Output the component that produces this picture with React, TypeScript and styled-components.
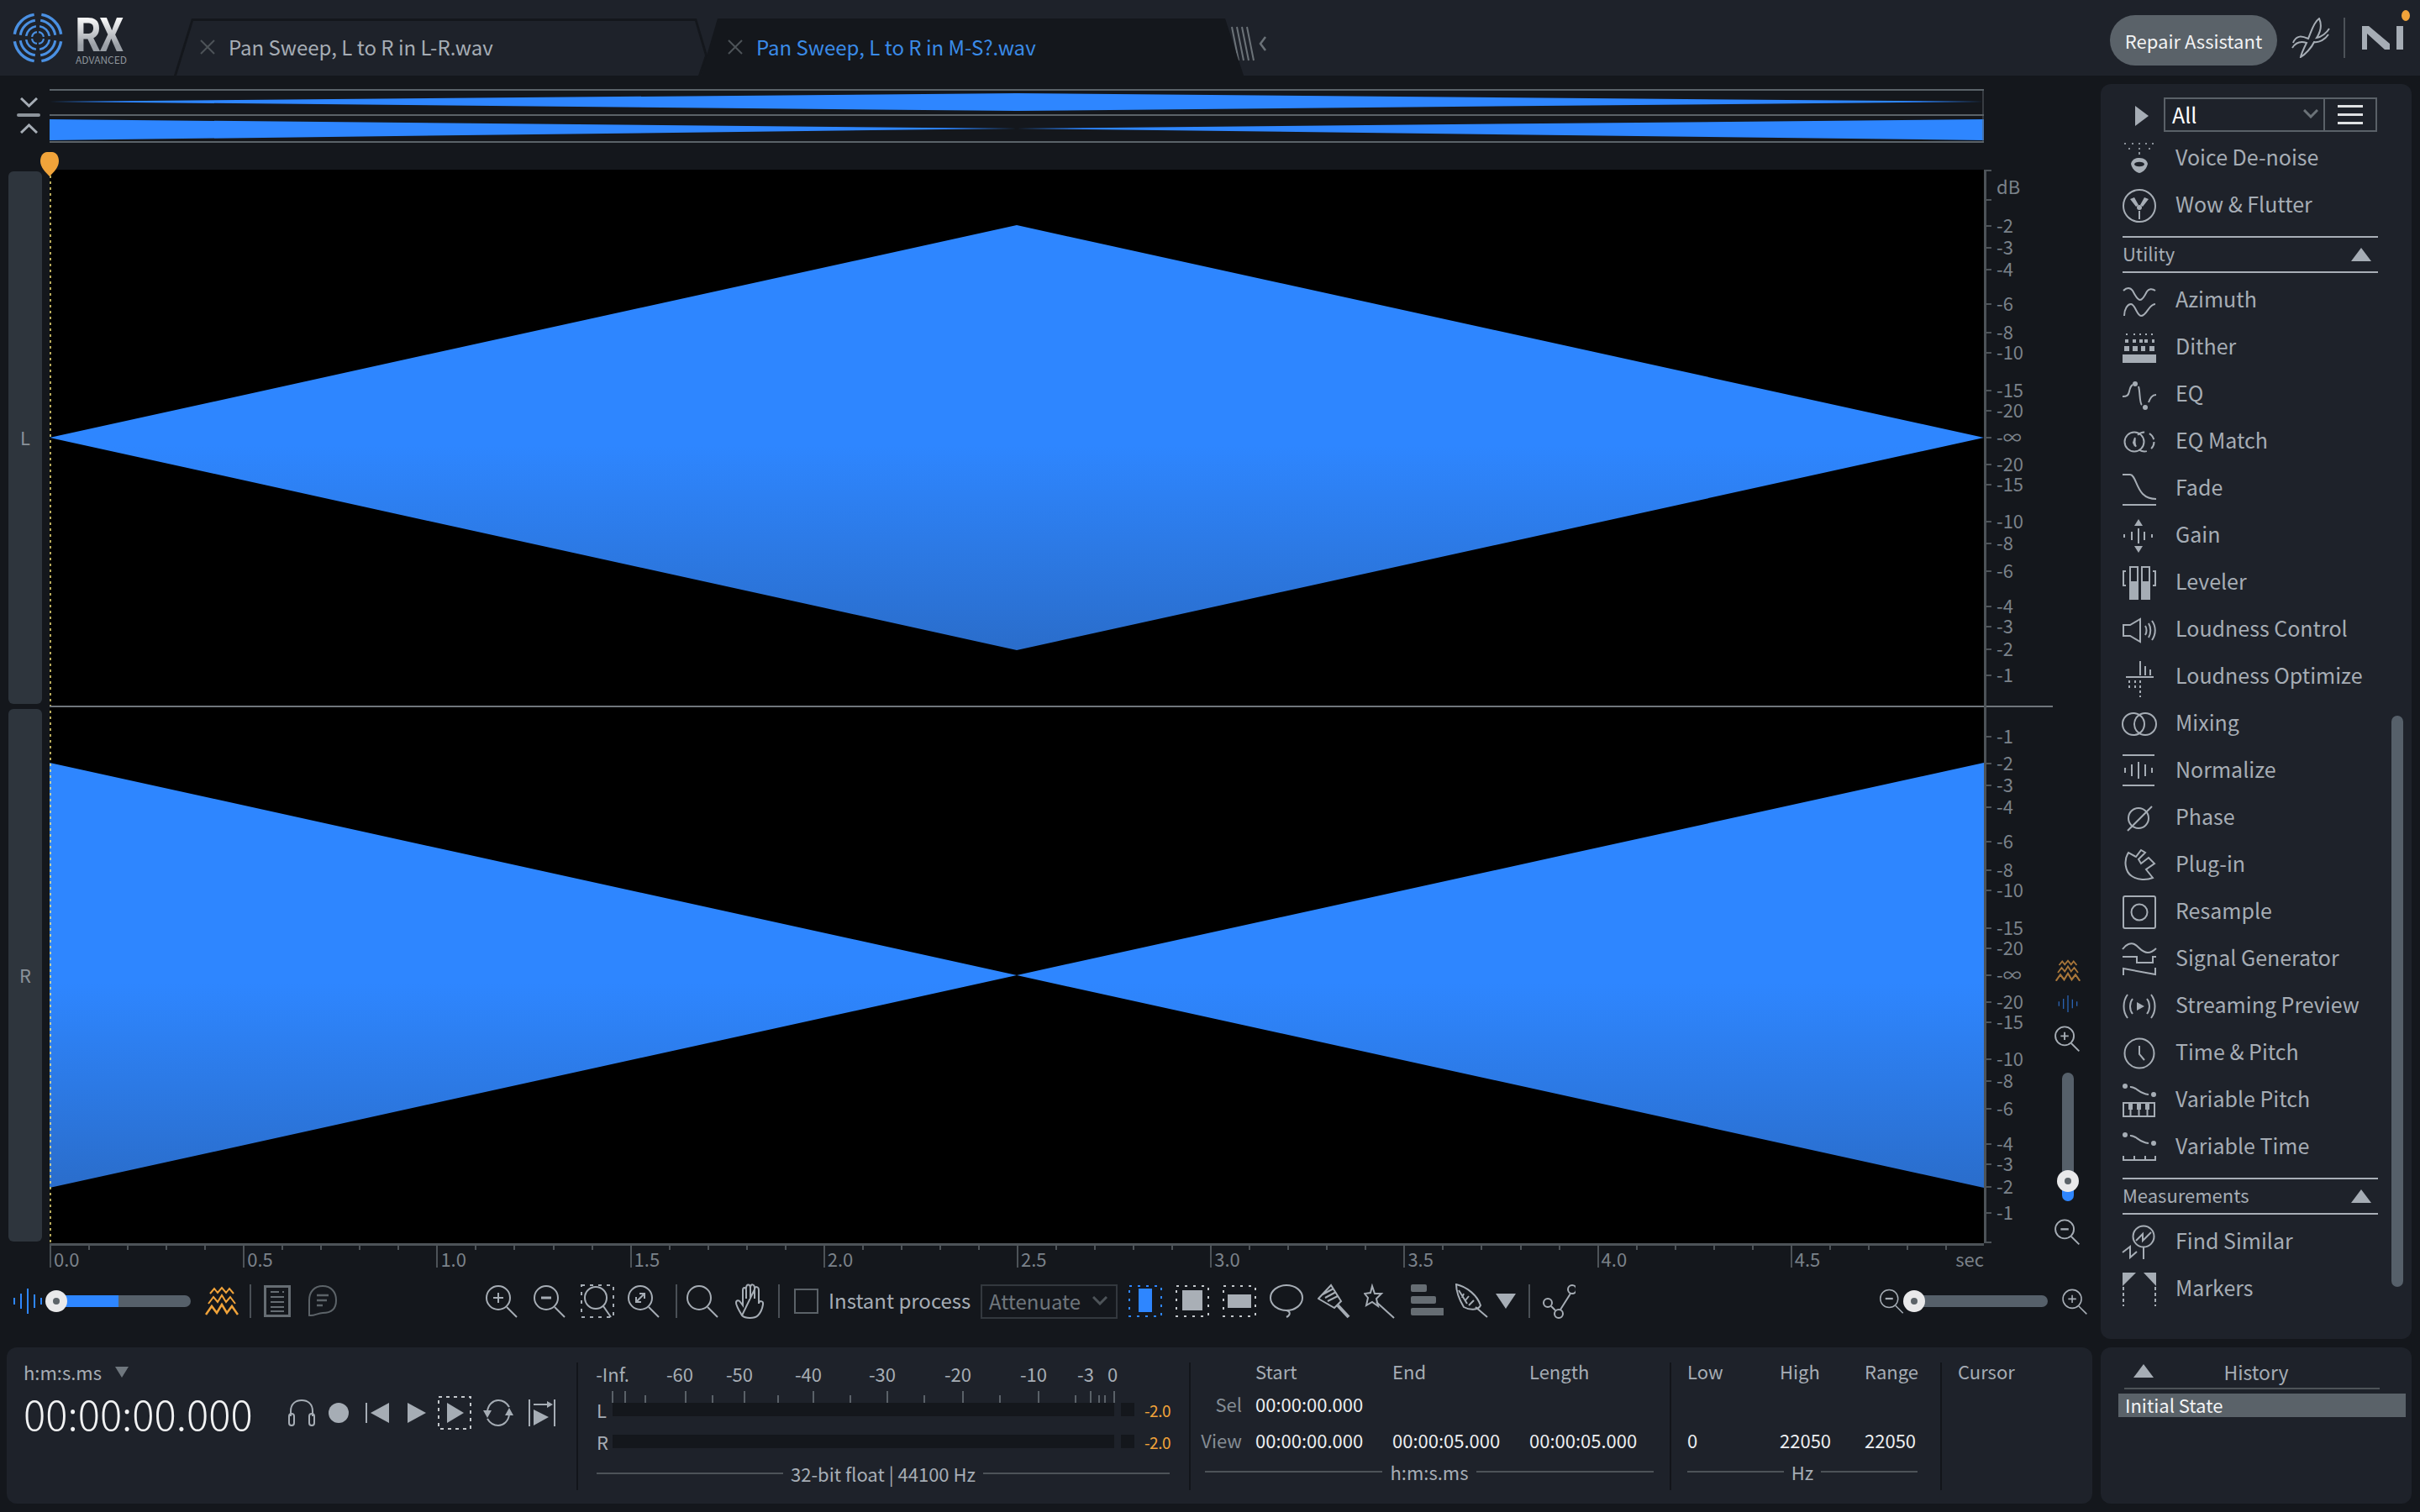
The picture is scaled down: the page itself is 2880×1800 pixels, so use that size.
import React from 'react';
import styled, { createGlobalStyle } from 'styled-components';

const FONT = `'Noto Sans CJK SC', 'Noto Sans', sans-serif`;
const BLUE = '#2e86ff';
const ORANGE = '#f0a33a';
const ICON = '#a6adb5';

const GlobalStyle = createGlobalStyle`
  html, body { margin: 0; padding: 0; background: #14171c; }
  * { box-sizing: border-box; }
`;

const Page = styled.div`
  width: 2880px;
  height: 1800px;
  display: flex;
  flex-direction: column;
  overflow: hidden;
  background: #14171c;
  color: ${ICON};
  font-family: ${FONT};
`;

/* ---------- top bar ---------- */
const TopBar = styled.header`
  height: 90px;
  flex: none;
  display: flex;
  align-items: flex-end;
  background: #1e222a;
`;
const Brand = styled.div`
  width: 207px;
  height: 90px;
  flex: none;
  display: flex;
  align-items: flex-start;
  padding: 15px 0 0 15px;
`;
const BrandWords = styled.div`
  margin-left: 13px;
  display: flex;
  flex-direction: column;
`;
const BrandRx = styled.span`
  width: 68px;
  height: 46px;
  font-size: 55px;
  line-height: 46px;
  font-weight: 700;
  letter-spacing: -3px;
  transform: scaleX(0.87);
  transform-origin: left center;
  background: linear-gradient(180deg, #ffffff 10%, #9a9fa6 85%);
  -webkit-background-clip: text;
  background-clip: text;
  color: transparent;
`;
const BrandSub = styled.span`
  margin: 3px 0 0 2px;
  font-size: 12px;
  line-height: 14px;
  color: #8d949b;
`;
const TabShell = styled.div<{ $active?: boolean }>`
  position: relative;
  height: 68px;
  width: ${(p) => (p.$active ? 646 : 635)}px;
  margin-left: ${(p) => (p.$active ? -8 : 0)}px;
  flex: none;
  display: flex;
  align-items: center;
  padding-left: ${(p) => (p.$active ? 32 : 31)}px;
  background: #14171c;
  clip-path: ${(p) =>
    p.$active
      ? 'polygon(0 100%, 20px 0, 624px 0, 100% 100%)'
      : 'polygon(0 100%, 21px 0, 622px 0, 635px 44px, 627px 100%)'};
  &::before {
    content: '';
    position: absolute;
    inset: 0;
    display: ${(p) => (p.$active ? 'none' : 'block')};
    background: #1e222a;
    clip-path: polygon(3px 100%, 23px 3px, 620px 3px, 632px 44px, 624px 100%);
  }
`;
const TabClose = styled.svg`
  position: relative;
  flex: none;
  margin-right: 16px;
`;
const TabName = styled.span<{ $active?: boolean }>`
  position: relative;
  font-size: 24px;
  line-height: 36px;
  color: ${(p) => (p.$active ? '#3a8be8' : ICON)};
  white-space: nowrap;
`;
const TabEnd = styled.svg`
  flex: none;
  margin: 0 0 17px -15px;
`;
const TopRight = styled.div`
  margin-left: auto;
  height: 90px;
  display: flex;
  align-items: center;
  padding-right: 20px;
`;
const RepairButton = styled.button`
  width: 199px;
  height: 60px;
  margin-top: 6px;
  padding: 0;
  border: 0;
  border-radius: 30px;
  background: #5a6269;
  color: #f2f3f4;
  font-family: ${FONT};
  font-size: 22px;
`;
const TopDivider = styled.div`
  width: 2px;
  height: 48px;
  margin: 0 20px 0 16px;
  background: #4c5258;
`;
const NiWrap = styled.div`
  position: relative;
  height: 28px;
  width: 49px;
`;
const UpdateDot = styled.span`
  position: absolute;
  right: -8px;
  top: -19px;
  width: 10px;
  height: 13px;
  border-radius: 50%;
  background: ${ORANGE};
`;

/* ---------- workspace ---------- */
const Workspace = styled.div`
  flex: 1;
  min-height: 0;
  display: grid;
  grid-template-columns: 2482px 370px;
  grid-template-rows: 1494px 186px;
  gap: 10px;
  padding: 10px 10px 10px 8px;
`;
const Editor = styled.section`
  position: relative;
  display: flex;
  flex-direction: column;
`;
const OverviewRow = styled.div`
  margin-top: 6px;
  height: 64px;
  display: flex;
`;
const CollapseBox = styled.div`
  width: 51px;
  flex: none;
  padding: 10px 0 0 16px;
`;
const OverviewStrip = styled.svg`
  flex: none;
  display: block;
`;
const Playhead = styled.svg`
  position: absolute;
  left: 40px;
  top: 81px;
  z-index: 2;
`;
const WaveRow = styled.div`
  position: relative;
  margin-top: 32px;
  height: 1278px;
  display: flex;
`;
const Handles = styled.div`
  width: 51px;
  flex: none;
  padding: 2px 9px 2px 2px;
  display: flex;
  flex-direction: column;
  gap: 6px;
`;
const Handle = styled.div`
  flex: 1;
  display: flex;
  align-items: center;
  justify-content: center;
  padding-bottom: 3px;
  border-radius: 6px;
  background: #2e353d;
  font-size: 22px;
  color: #8a929a;
`;
const WaveCanvas = styled.svg`
  flex: none;
  display: block;
  background: #000;
`;
const ChannelRule = styled.div`
  position: absolute;
  left: 51px;
  top: 638px;
  width: 2384px;
  height: 2px;
  background: #70767c;
`;
const DbScale = styled.div`
  position: relative;
  width: 79px;
  flex: none;
  border-left: 3px solid #4d5358;
`;
const DbTick = styled.div<{ $y: number }>`
  position: absolute;
  left: 0;
  top: ${(p) => p.$y}px;
  height: 2px;
  display: flex;
  align-items: center;
  white-space: nowrap;
  &::before {
    content: '';
    width: 6px;
    height: 2px;
    margin-right: 6px;
    background: #4d5358;
  }
`;
const DbText = styled.span`
  padding-bottom: 4px;
  font-size: 22px;
  line-height: 20px;
  color: #7b828a;
`;
const DbLabelOnly = styled.div<{ $y: number }>`
  position: absolute;
  left: 12px;
  top: ${(p) => p.$y}px;
  font-size: 22px;
  line-height: 24px;
  color: #7b828a;
`;
const ZoomColumn = styled.div`
  width: 42px;
  flex: none;
  display: flex;
  flex-direction: column;
  align-items: center;
  justify-content: flex-end;
  margin-bottom: -3px;
`;
const VSliderTrack = styled.div`
  position: relative;
  width: 14px;
  height: 153px;
  margin: 24px 0 20px;
  border-radius: 7px;
  background: linear-gradient(180deg, #56606a 0 88%, ${BLUE} 88%);
`;
const Knob = styled.span`
  position: absolute;
  width: 26px;
  height: 26px;
  border-radius: 50%;
  background: #e9e9ea;
  &::after {
    content: '';
    position: absolute;
    left: 9px;
    top: 9px;
    width: 8px;
    height: 8px;
    border-radius: 50%;
    background: #5c6368;
  }
`;
const VKnob = styled(Knob)`
  left: -6px;
  top: 116px;
`;

/* time ruler */
const TimeRuler = styled.div`
  position: relative;
  margin-left: 51px;
  width: 2302px;
  height: 46px;
  border-top: 3px solid #4d5358;
  flex: none;
`;
const MajorTick = styled.div<{ $x: number }>`
  position: absolute;
  left: ${(p) => p.$x}px;
  top: 0;
  height: 26px;
  padding-left: 3px;
  border-left: 2px solid #4d5358;
  font-size: 22px;
  line-height: 30px;
  color: #7b828a;
`;
const MinorTick = styled.div<{ $x: number }>`
  position: absolute;
  left: ${(p) => p.$x}px;
  top: 0;
  width: 2px;
  height: 5px;
  background: #4d5358;
`;
const RulerUnit = styled.div`
  position: absolute;
  right: 0;
  top: 0;
  font-size: 22px;
  line-height: 30px;
  color: #7b828a;
`;

/* toolbar */
const Toolbar = styled.div`
  margin-top: 2px;
  height: 42px;
  display: flex;
  align-items: center;
  flex: none;
`;
const Tool = styled.svg<{ $ml?: number }>`
  flex: none;
  display: block;
  margin-left: ${(p) => p.$ml ?? 0}px;
`;
const ToolSep = styled.div<{ $ml: number }>`
  width: 2px;
  height: 40px;
  flex: none;
  margin-left: ${(p) => p.$ml}px;
  background: #4a5056;
`;
const HSlider = styled.div<{ $w: number; $fill: number; $ml: number }>`
  position: relative;
  flex: none;
  width: ${(p) => p.$w}px;
  height: 14px;
  margin-left: ${(p) => p.$ml}px;
  border-radius: 7px;
  background: linear-gradient(90deg, ${BLUE} 0 ${(p) => p.$fill}px, #56606a ${(p) => p.$fill}px);
`;
const HKnob = styled(Knob)`
  left: -13px;
  top: -6px;
`;
const CheckBox = styled.span<{ $ml: number }>`
  width: 29px;
  height: 30px;
  flex: none;
  margin-left: ${(p) => p.$ml}px;
  border: 2px solid #5b6268;
`;
const ToolText = styled.span`
  flex: none;
  width: 170px;
  margin-left: 12px;
  padding-bottom: 2px;
  font-size: 24px;
  line-height: 32px;
  color: ${ICON};
  white-space: nowrap;
`;
const ModeSelect = styled.div`
  width: 163px;
  height: 41px;
  flex: none;
  margin-left: 11px;
  padding: 0 10px 2px 8px;
  display: flex;
  align-items: center;
  justify-content: space-between;
  border: 2px solid #33383e;
  font-size: 24px;
  color: #6f767d;
`;

/* ---------- sidebar ---------- */
const Sidebar = styled.aside`
  position: relative;
  padding: 16px 40px 0 26px;
  border-radius: 12px;
  background: #1e222a;
`;
const ModuleHead = styled.div`
  height: 45px;
  display: flex;
  align-items: flex-start;
`;
const HeadPlay = styled.svg`
  flex: none;
  margin: 10px 18px 0 15px;
`;
const ModuleSelect = styled.div`
  width: 254px;
  height: 41px;
  flex: none;
  display: flex;
  border: 2px solid #5a6168;
  font-size: 25px;
  color: #fff;
`;
const ModuleValue = styled.div`
  flex: 1;
  padding: 0 6px 2px 8px;
  display: flex;
  align-items: center;
  justify-content: space-between;
  line-height: 34px;
`;
const MenuBox = styled.div`
  width: 62px;
  flex: none;
  display: flex;
  flex-direction: column;
  justify-content: center;
  gap: 7px;
  padding: 0 15px;
  border-left: 2px solid #5a6168;
  i {
    display: block;
    height: 3px;
    background: #dfe1e3;
  }
`;
const ModuleRow = styled.div`
  height: 56px;
  display: flex;
  align-items: center;
  font-size: 25px;
  line-height: 36px;
  color: ${ICON};
  white-space: nowrap;
`;
const ModuleIcon = styled.svg`
  width: 40px;
  height: 40px;
  flex: none;
  margin-right: 23px;
  overflow: visible;
`;
const ModuleName = styled.span`
  padding-bottom: 6px;
`;
const SectionHead = styled.div`
  height: 44px;
  margin: 8px 0 5px;
  display: flex;
  align-items: center;
  justify-content: space-between;
  padding: 0 8px 5px 0;
  border-top: 2px solid #a9afb7;
  border-bottom: 2px solid #a9afb7;
  font-size: 22px;
  line-height: 30px;
`;
const SectionArrow = styled.span`
  width: 0;
  height: 0;
  margin-top: 5px;
  border-left: 12px solid transparent;
  border-right: 12px solid transparent;
  border-bottom: 16px solid ${ICON};
`;
const ScrollThumb = styled.div`
  position: absolute;
  left: 346px;
  top: 752px;
  width: 14px;
  height: 680px;
  border-radius: 7px;
  background: #56606a;
`;

/* ---------- bottom ---------- */
const StatusPanel = styled.section`
  display: flex;
  border-radius: 12px;
  background: #1e222a;
`;
const Divider = styled.div`
  width: 2px;
  flex: none;
  margin: 18px 0 16px;
  background: #12151a;
`;
const TimeBlock = styled.div`
  width: 678px;
  flex: none;
  padding: 15px 0 0 20px;
`;
const TimeFormat = styled.div`
  height: 28px;
  display: flex;
  align-items: center;
  font-size: 22px;
  line-height: 28px;
`;
const FormatArrow = styled.span`
  margin-left: 16px;
  width: 0;
  height: 0;
  border-left: 8px solid transparent;
  border-right: 8px solid transparent;
  border-top: 13px solid #6f777e;
`;
const TimeRow = styled.div`
  height: 70px;
  display: flex;
  align-items: center;
`;
const TimeValue = styled.div`
  width: 315px;
  flex: none;
  font-size: 49px;
  line-height: 70px;
  font-weight: 300;
  color: #f1f2f3;
  white-space: nowrap;
`;
const MeterBlock = styled.div`
  width: 727px;
  flex: none;
  padding-left: 22px;
`;
const MeterScale = styled.div`
  position: relative;
  height: 66px;
`;
const MeterLabel = styled.span<{ $x: number }>`
  position: absolute;
  left: ${(p) => p.$x}px;
  top: 15px;
  transform: translateX(-50%);
  font-size: 22px;
  line-height: 32px;
  color: ${ICON};
`;
const MeterTick = styled.span<{ $x: number; $short?: boolean }>`
  position: absolute;
  left: ${(p) => p.$x}px;
  bottom: 0;
  width: 2px;
  height: ${(p) => (p.$short ? 9 : 14)}px;
  background: #5a6168;
`;
const MeterRow = styled.div<{ $mt: number }>`
  height: 16px;
  margin-top: ${(p) => p.$mt}px;
  display: flex;
  align-items: center;
  font-size: 22px;
`;
const MeterName = styled.span`
  width: 19px;
  flex: none;
`;
const MeterBar = styled.span`
  width: 597px;
  height: 16px;
  flex: none;
  background: #14171c;
`;
const MeterPeak = styled.span`
  width: 16px;
  height: 16px;
  flex: none;
  margin-left: 8px;
  background: #14171c;
`;
const MeterValue = styled.span`
  margin-left: 12px;
  font-size: 19px;
  letter-spacing: -0.5px;
  color: ${ORANGE};
`;
const RuleTitle = styled.div<{ $mt?: number; $gap: number }>`
  height: 28px;
  margin-top: ${(p) => p.$mt ?? 0}px;
  display: flex;
  align-items: center;
  gap: ${(p) => p.$gap}px;
  font-size: 22px;
  line-height: 28px;
  color: ${ICON};
  white-space: nowrap;
  &::before,
  &::after {
    content: '';
    flex: 1;
    height: 2px;
    background: #4d5358;
  }
`;
const MeterFooter = styled(RuleTitle)`
  width: 682px;
`;
const RangeGrid = styled.div<{ $columns: string; $width: number }>`
  width: ${(p) => p.$width}px;
  flex: none;
  padding-top: 8px;
  display: grid;
  grid-template-columns: ${(p) => p.$columns};
  grid-template-rows: 40px 38px 48px 28px;
  align-items: center;
  font-size: 22px;
  line-height: 28px;
`;
const RangeHead = styled.span`
  color: ${ICON};
  white-space: nowrap;
`;
const RangeLabel = styled.span`
  text-align: right;
  padding-right: 16px;
  color: #858d95;
`;
const RangeValue = styled.span`
  color: #eceef0;
  white-space: nowrap;
`;
const RangeFooter = styled(RuleTitle)<{ $from: number; $pr: number }>`
  grid-column: 1 / -1;
  margin-left: ${(p) => p.$from}px;
  margin-right: ${(p) => p.$pr}px;
`;
const CursorBlock = styled.div`
  padding: 14px 0 0 19px;
  font-size: 22px;
  line-height: 28px;
`;
const HistoryPanel = styled.aside`
  padding: 10px 7px 0 21px;
  border-radius: 12px;
  background: #1e222a;
`;
const HistoryHead = styled.div`
  position: relative;
  height: 40px;
  margin: 0 31px 0 7px;
  display: flex;
  align-items: center;
  justify-content: center;
  border-bottom: 2px solid #4d5358;
  font-size: 23px;
  line-height: 30px;
  padding-left: 10px;
`;
const HistoryArrow = styled.span`
  position: absolute;
  left: 11px;
  top: 10px;
  width: 0;
  height: 0;
  border-left: 12px solid transparent;
  border-right: 12px solid transparent;
  border-bottom: 16px solid ${ICON};
`;
const HistoryItem = styled.div`
  height: 28px;
  margin-top: 5px;
  padding-left: 8px;
  background: #5a6269;
  color: #f2f3f4;
  font-size: 22px;
  line-height: 26px;
`;

/* ---------- drawings ---------- */
const Logo = () => (
  <svg width="60" height="60" viewBox="0 0 60 60" fill="none" stroke="#4a90e2">
    {[
      [28, 3.4],
      [21, 3],
      [14, 2.6],
      [7, 2.2],
    ].map(([r, w]) => (
      <circle key={r} cx="30" cy="30" r={r} pathLength="100" strokeWidth={w} strokeDasharray="20 5" strokeDashoffset="-2.5" />
    ))}
  </svg>
);

const CloseX = () => (
  <TabClose width="18" height="18" viewBox="0 0 18 18" stroke="#4d5358" strokeWidth="2" fill="none">
    <path d="M1 1 L17 17 M17 1 L1 17" />
  </TabClose>
);

const zoomBase = (
  <>
    <circle cx="15" cy="17" r="14" />
    <path d="M25 28 L37 40" />
  </>
);
const IconProps = { width: 40, height: 42, viewBox: '0 0 40 42', fill: 'none', stroke: ICON, strokeWidth: 2 };

const WaveTicks = ({ color }: { color: string }) => (
  <g stroke={color} strokeWidth="2">
    <path d="M1 17 V25 M9 12 V30 M17 6 V36 M25 13 V29 M33 17 V25" />
  </g>
);

const SpectralTicks = ({ stroke, w = 2 }: { stroke: string; w?: number }) => (
  <g fill="none" stroke={stroke} strokeWidth={w}>
    <path d="M6 9 L11 3 L15 8 L20 2 L25 8 L29 3 L34 9" />
    <path d="M4 21 L10 13 L15 19 L20 11 L25 19 L30 13 L36 21" />
    <path d="M1 34 L8 24 L14 32 L20 22 L26 32 L32 24 L39 34" strokeWidth={w + 0.5} />
  </g>
);

const rowIcons: Record<string, React.ReactNode> = {
  voice: (
    <>
      <path d="M3 1v2M12 1v2M20 1v2M28 1v2M36 1v2M8 7v2M20 7v2M32 7v2M20 12v3" strokeWidth="1.6" />
      <path d="M20 19 C26 19 29 22 30 26 C29 31 25 36 20 37 C15 36 11 31 10 26 C11 22 14 19 20 19 Z" fill={ICON} stroke="none" />
      <ellipse cx="20" cy="26.5" rx="6" ry="2.8" fill="#1e222a" stroke="none" />
    </>
  ),
  wow: (
    <>
      <circle cx="20" cy="20" r="19" />
      <path d="M9 12 L14 10 L19 19 L16 21 Z M31 12 L26 10 L21 19 L24 21 Z" fill={ICON} stroke="none" />
      <circle cx="20" cy="22" r="3" fill={ICON} stroke="none" />
      <path d="M20 26 V36" />
    </>
  ),
  azimuth: (
    <>
      <path d="M1 8 C5 4 9 4 12 8 C15 14 18 19 21 19 C24 19 27 13 29 9 C31 6 35 5 39 8" />
      <path d="M2 38 C2 30 6 24 10 24 C15 24 17 38 22 38 C29 38 31 24 39 24" />
    </>
  ),
  dither: (
    <g fill={ICON} stroke="none">
      <path d="M4 3h2v2h-2zM13 3h2v2h-2zM20 3h2v2h-2zM27 3h2v2h-2zM34 3h2v2h-2z" />
      <path d="M3 10h4v4h-4zM12 10h4v4h-4zM20 10h4v4h-4zM26 10h4v4h-4zM35 10h3v4h-3z" />
      <path d="M2 18h6v6h-6zM12 18h6v6h-6zM22 18h5v6h-5zM32 18h6v6h-6z" />
      <rect x="0" y="28" width="40" height="10" />
    </g>
  ),
  eq: (
    <>
      <path d="M0 22 C5 22 7 21 8 16 C9 11 10 9 12 8" />
      <path d="M19 10 C21 16 20 30 23 32" />
      <path d="M31 29 C33 24 35 20 40 20" />
      <circle cx="15" cy="7" r="3" fill={ICON} stroke="none" />
      <circle cx="27" cy="35" r="3" fill={ICON} stroke="none" />
    </>
  ),
  eqmatch: (
    <>
      <circle cx="14" cy="20" r="11.5" />
      <circle cx="26" cy="20" r="11.5" strokeDasharray="9 6" />
      <path d="M15 15 L13 21 L15 25" />
    </>
  ),
  fade: <path d="M0 3 H9 C15 3 16 18 24 26 C29 31 34 32 40 32 M0 39 H40" />,
  gain: (
    <>
      <path d="M19 0 L24 8 H14 Z M19 40 L24 32 H14 Z" fill={ICON} stroke="none" />
      <path d="M2 18 V22 M11 15 V25 M19 11 V29 M26 15 V25 M35 18 V22" />
    </>
  ),
  leveler: (
    <>
      <path d="M4 6 H1 V23 H4 M36 6 H39 V23 H36" />
      <rect x="9" y="1" width="9" height="38" />
      <rect x="23" y="1" width="9" height="38" />
      <rect x="8" y="18" width="10" height="21" fill={ICON} stroke="none" />
      <rect x="22" y="18" width="10" height="21" fill={ICON} stroke="none" />
    </>
  ),
  loudcontrol: (
    <>
      <path d="M1 14 V27 H9 L21 34 V7 L9 14 Z" />
      <path d="M27 15 C29 18 29 23 27 26 M31 12 C34 17 34 24 31 29 M35 9 C40 16 40 25 35 32" />
    </>
  ),
  loudopt: (
    <>
      <path d="M4 20 H37 M21 1 V18 M27 7 V18 M33 11 V18" />
      <path d="M8 24 V36 M15 24 V34 M21 24 V44" strokeDasharray="3 3" />
    </>
  ),
  mixing: (
    <>
      <circle cx="13" cy="20" r="13" />
      <circle cx="27" cy="20" r="13" />
    </>
  ),
  normalize: (
    <path d="M0 1 H38 M0 37 H38 M3 16 V22 M11 12 V26 M19 9 V29 M27 12 V26 M35 16 V22" />
  ),
  phase: (
    <>
      <circle cx="19" cy="20" r="12" />
      <path d="M6 35 L35 6" />
    </>
  ),
  plugin: <path d="M7 5 C1 14 3 28 11 33 C18 38 29 38 36 35 L28 25 L38 18 L31 11 L22 18 L19 13 L27 5 L22 2 L16 10 Z" />,
  resample: (
    <>
      <rect x="1" y="1" width="38" height="38" rx="2" />
      <circle cx="20" cy="20" r="9.5" />
    </>
  ),
  signal: (
    <path d="M0 8 C4 2 10 0 14 2 C20 5 22 12 30 12 C34 12 37 10 40 7 M0 17 H17 V24 H36 V17 H40 M1 39 V31 L39 38 V30" />
  ),
  streaming: (
    <>
      <path d="M17 15 L26 20 L17 25 Z" fill={ICON} stroke="none" />
      <path d="M12 11 C8 16 8 24 12 29 M6 6 C0 14 0 26 6 34 M29 11 C33 16 33 24 29 29 M34 6 C40 14 40 26 34 34" />
    </>
  ),
  time: (
    <>
      <circle cx="20" cy="20" r="17.5" />
      <path d="M20 11 V21 L26 28" />
    </>
  ),
  varpitch: (
    <>
      <circle cx="3" cy="3" r="3" fill={ICON} stroke="none" />
      <circle cx="37" cy="13" r="3" fill={ICON} stroke="none" />
      <path d="M9 4 C16 3 19 12 31 13" />
      <rect x="1" y="23" width="37" height="16" />
      <path d="M7 23h5v8h-5zM17 23h5v8h-5zM27 23h5v8h-5z" fill={ICON} stroke="none" />
      <path d="M9.5 31V39M19.5 31V39M29.5 31V39" />
    </>
  ),
  vartime: (
    <>
      <circle cx="3" cy="5" r="3" fill={ICON} stroke="none" />
      <circle cx="37" cy="15" r="3" fill={ICON} stroke="none" />
      <path d="M9 6 C16 5 19 14 31 15" />
      <path d="M1 30 V35 H39 V30 M14 30 V35 M27 30 V35" />
    </>
  ),
  similar: (
    <>
      <circle cx="25" cy="13" r="12.5" />
      <path d="M16 18 L24 10 V18 L34 8 M25 25 V40 M0 32 L9 25 V38 L17 31" />
    </>
  ),
  markers: (
    <>
      <path d="M0 0 H16 L0 16 Z M25 0 H40 V16 Z" fill={ICON} stroke="none" />
      <path d="M1 17 V40 M39 17 V40" strokeDasharray="4 3" />
    </>
  ),
};

const Module = ({ icon, name }: { icon: string; name: string }) => (
  <ModuleRow>
    <ModuleIcon viewBox="0 0 40 40" fill="none" stroke={ICON} strokeWidth="2">
      {rowIcons[icon]}
    </ModuleIcon>
    <ModuleName>{name}</ModuleName>
  </ModuleRow>
);

const utilityModules = [
  ['azimuth', 'Azimuth'],
  ['dither', 'Dither'],
  ['eq', 'EQ'],
  ['eqmatch', 'EQ Match'],
  ['fade', 'Fade'],
  ['gain', 'Gain'],
  ['leveler', 'Leveler'],
  ['loudcontrol', 'Loudness Control'],
  ['loudopt', 'Loudness Optimize'],
  ['mixing', 'Mixing'],
  ['normalize', 'Normalize'],
  ['phase', 'Phase'],
  ['plugin', 'Plug-in'],
  ['resample', 'Resample'],
  ['signal', 'Signal Generator'],
  ['streaming', 'Streaming Preview'],
  ['time', 'Time & Pitch'],
  ['varpitch', 'Variable Pitch'],
  ['vartime', 'Variable Time'],
];

// label and distance from the channel centre
const dbRows: [string, number][] = [
  ['-2', -252],
  ['-3', -226],
  ['-4', -200],
  ['-6', -159],
  ['-8', -125],
  ['-10', -101],
  ['-15', -56],
  ['-20', -32],
  ['-∞', 0],
  ['-20', 32],
  ['-15', 56],
  ['-10', 100],
  ['-8', 126],
  ['-6', 159],
  ['-4', 201],
  ['-3', 225],
  ['-2', 252],
  ['-1', 283],
];
const secondChannel: [string, number][] = [['-1', -284], ...dbRows];

const meterLabels: [string, number][] = [
  ['-Inf.', 19],
  ['-60', 99],
  ['-50', 170],
  ['-40', 252],
  ['-30', 340],
  ['-20', 430],
  ['-10', 520],
  ['-3', 582],
  ['0', 614],
];
const tallTicks = [18, 33, 105, 175, 257, 345, 435, 525, 587, 615];
const shortTicks = [57, 137, 215, 301, 389, 479, 569, 597, 604];

const seconds = ['0.0', '0.5', '1.0', '1.5', '2.0', '2.5', '3.0', '3.5', '4.0', '4.5'];

const zoomIn = (ml: number) => (
  <Tool {...IconProps} $ml={ml}>
    {zoomBase}
    <path d="M15 11 V23 M9 17 H21" />
  </Tool>
);
const zoomOut = (ml: number) => (
  <Tool {...IconProps} $ml={ml}>
    {zoomBase}
    <path d="M9 17 H21" strokeWidth="3" />
  </Tool>
);

const SelectBox = ({ ml, x, y, w, h, color }: { ml: number; x: number; y: number; w: number; h: number; color: string }) => (
  <Tool width="40" height="42" viewBox="0 0 40 42" $ml={ml}>
    <rect x="1" y="3" width="38" height="36" fill="none" stroke={color === BLUE ? BLUE : '#c4c8cc'} strokeWidth="2" strokeDasharray="3 7" />
    <rect x={x} y={y} width={w} height={h} fill={color} />
  </Tool>
);

const Chevron = ({ up, color = '#a6adb5' }: { up?: boolean; color?: string }) => (
  <svg width="21" height="12" viewBox="0 0 21 12" fill="none" stroke={color} strokeWidth="3" style={{ display: 'block' }}>
    <path d={up ? 'M1 11 L10.5 2 L20 11' : 'M1 1 L10.5 10 L20 1'} />
  </svg>
);

const CollapseBar = styled.div`
  width: 28px;
  height: 4px;
  margin: 7px 0 8px -4px;
  border-radius: 2px;
  background: #8d949b;
`;

export default function App() {
  return (
    <Page>
      <GlobalStyle />
      <TopBar>
        <Brand>
          <Logo />
          <BrandWords>
            <BrandRx>RX</BrandRx>
            <BrandSub>ADVANCED</BrandSub>
          </BrandWords>
        </Brand>
        <TabShell>
          <CloseX />
          <TabName>Pan Sweep, L to R in L-R.wav</TabName>
        </TabShell>
        <TabShell $active>
          <CloseX />
          <TabName $active>Pan Sweep, L to R in M-S?.wav</TabName>
        </TabShell>
        <TabEnd width="44" height="42" viewBox="0 0 44 42" fill="none" stroke="#6b7278" strokeWidth="2">
          <path d="M1 1 L9 41 M7 1 L15 41 M13 1 L21 41 M19 1 L27 41" />
          <path d="M41 13 L35 21 L41 29" strokeWidth="2.5" />
        </TabEnd>
        <TopRight>
          <RepairButton>Repair Assistant</RepairButton>
          <svg width="46" height="48" viewBox="0 0 46 48" fill="none" stroke={ICON} strokeWidth="2" style={{ marginLeft: 17 }}>
            <path d="M2 30 C6 20 13 22 20 25 C24 16 26 6 33 1 C37 10 34 18 30 24 C36 23 42 18 45 13" />
            <path d="M1 36 C6 28 12 28 18 30 C15 36 12 42 11 47 C16 44 24 36 27 29 C33 30 40 26 44 20" />
          </svg>
          <TopDivider />
          <NiWrap>
            <svg width="49" height="28" viewBox="0 0 49 28" fill={ICON}>
              <path d="M0 28 V0 H8 L33 21 V28 H27 L6 9 V28 Z M41 0 H49 V28 H41 Z" />
            </svg>
            <UpdateDot />
          </NiWrap>
        </TopRight>
      </TopBar>

      <Workspace>
        <Editor>
          <OverviewRow>
            <CollapseBox>
              <Chevron />
              <CollapseBar />
              <Chevron up />
            </CollapseBox>
            <OverviewStrip width="2302" height="64" viewBox="0 0 2302 64">
              <rect x="0" y="0" width="2302" height="64" fill="#14171c" />
              <path d="M0 15 L1151 5 L2302 15 L1151 26 Z" fill={BLUE} />
              <path d="M0 36 L1151 47 L0 61 Z M2302 36 L1151 47 L2302 61 Z" fill={BLUE} />
              <path d="M0 1 H2302 M0 31 H2302 M0 63 H2302" stroke="#5a6268" strokeWidth="2" />
              <path d="M2301 0 V64" stroke="#5a6268" strokeWidth="1" />
            </OverviewStrip>
          </OverviewRow>
          <Playhead width="32" height="1300" viewBox="0 0 32 1300" fill="none">
            <path d="M8 0 C3 0 0 5 0 11 C0 18 6 24 11 29 C16 24 22 18 22 11 C22 5 19 0 14 0 Z" fill={ORANGE} />
          </Playhead>
          <WaveRow>
            <Handles>
              <Handle>L</Handle>
              <Handle>R</Handle>
            </Handles>
            <WaveCanvas width="2302" height="1278" viewBox="0 0 2302 1278">
              <defs>
                <linearGradient id="waveL" gradientUnits="userSpaceOnUse" x1="0" x2="0" y1="328" y2="572">
                  <stop offset="0" stopColor={BLUE} />
                  <stop offset="1" stopColor="#2a6dcb" />
                </linearGradient>
                <linearGradient id="waveR" gradientUnits="userSpaceOnUse" x1="0" x2="0" y1="968" y2="1212">
                  <stop offset="0" stopColor={BLUE} />
                  <stop offset="1" stopColor="#2a6dcb" />
                </linearGradient>
              </defs>
              <path d="M0 319 L1151 66 L2302 319 L1151 572 Z" fill="url(#waveL)" />
              <path d="M0 706 L1151 959 L2302 706 V1212 L1151 959 L0 1212 Z" fill="url(#waveR)" />
              <path d="M1 0 V1278" stroke="#f4e27a" strokeWidth="1.5" strokeDasharray="3 4" />
            </WaveCanvas>
            <ChannelRule />
            <DbScale>
              <DbTick $y={0} />
              <DbTick $y={35} />
              <DbLabelOnly $y={7}>dB</DbLabelOnly>
              {dbRows.map(([label, dy], i) => (
                <DbTick key={i} $y={319 + dy - 1}>
                  <DbText>{label}</DbText>
                </DbTick>
              ))}
              {secondChannel.map(([label, dy], i) => (
                <DbTick key={i} $y={959 + dy - 1}>
                  <DbText>{label}</DbText>
                </DbTick>
              ))}
              <DbTick $y={1276} />
            </DbScale>
            <ZoomColumn>
              <svg width="30" height="26" viewBox="0 0 40 34">
                <SpectralTicks stroke="#a8763a" w={2.4} />
              </svg>
              <svg width="26" height="24" viewBox="0 3 34 36" style={{ marginTop: 15 }}>
                <WaveTicks color="#2a62b0" />
              </svg>
              <Tool width="32" height="33" viewBox="0 0 40 42" fill="none" stroke={ICON} strokeWidth="2.4" style={{ marginTop: 13 }}>
                {zoomBase}
                <path d="M15 11 V23 M9 17 H21" />
              </Tool>
              <VSliderTrack>
                <VKnob />
              </VSliderTrack>
              <Tool width="32" height="33" viewBox="0 0 40 42" fill="none" stroke={ICON} strokeWidth="2.4">
                {zoomBase}
                <path d="M9 17 H21" strokeWidth="3" />
              </Tool>
            </ZoomColumn>
          </WaveRow>
          <TimeRuler>
            {seconds.map((s, i) => (
              <MajorTick key={s} $x={i * 230.2}>
                {s}
              </MajorTick>
            ))}
            {Array.from({ length: 50 }, (_, i) => i)
              .filter((i) => i % 5 !== 0)
              .map((i) => (
                <MinorTick key={i} $x={i * 46.04} />
              ))}
            <RulerUnit>sec</RulerUnit>
          </TimeRuler>
          <Toolbar>
            <Tool width="36" height="42" viewBox="0 0 36 42" $ml={8}>
              <WaveTicks color={BLUE} />
            </Tool>
            <HSlider $w={160} $fill={74} $ml={15}>
              <HKnob />
            </HSlider>
            <Tool width="40" height="36" viewBox="0 0 40 36" $ml={17}>
              <SpectralTicks stroke={ORANGE} />
            </Tool>
            <ToolSep $ml={13} />
            <Tool width="32" height="38" viewBox="0 0 32 38" fill="none" stroke="#666d73" strokeWidth="3" $ml={15}>
              <rect x="1.5" y="1.5" width="29" height="35" />
              <path d="M8 8 H18 M22 8 H24 M8 14 H24 M8 20 H24 M8 26 H24 M8 31 H24" strokeWidth="2" />
            </Tool>
            <Tool width="36" height="38" viewBox="0 0 36 38" fill="none" stroke="#5c6368" strokeWidth="2" $ml={20}>
              <path d="M2 36 V18 C2 8 8 1 18 1 C28 1 34 8 34 18 C34 28 28 33 18 33 C12 33 8 37 2 36 Z" />
              <path d="M11 12 H25 M11 18 H23 M11 24 H18" strokeWidth="2.4" />
            </Tool>
            {zoomIn(176)}
            {zoomOut(17)}
            <Tool {...IconProps} $ml={16}>
              <rect x="1" y="2" width="38" height="38" strokeDasharray="4 6" />
              <circle cx="18" cy="17" r="13" />
              <path d="M27 27 L36 40" />
            </Tool>
            <Tool {...IconProps} $ml={16}>
              {zoomBase}
              <path d="M10 22 L20 12 M14 12 H20 V18 M10 16 V22 H16" />
            </Tool>
            <ToolSep $ml={17} />
            <Tool {...IconProps} $ml={11}>
              {zoomBase}
            </Tool>
            <Tool width="36" height="42" viewBox="0 0 36 42" fill="none" stroke={ICON} strokeWidth="2" $ml={18}>
              <path d="M8 38 C5 33 1 26 1 23 C1 20 4 19 6 22 L9 26 V8 C9 4 13 4 13 8 V18 M13 6 C13 0 18 0 18 6 V18 M18 5 C18 0 23 0 23 6 V18 M23 7 C23 3 28 3 28 8 V24 C28 20 34 20 33 25 C32 31 30 35 27 38 C23 42 12 42 8 38 Z" />
            </Tool>
            <ToolSep $ml={15} />
            <CheckBox $ml={17} />
            <ToolText>Instant process</ToolText>
            <ModeSelect>
              Attenuate
              <svg width="18" height="11" viewBox="0 0 18 11" fill="none" stroke="#4d5358" strokeWidth="3">
                <path d="M1 1 L9 9 L17 1" />
              </svg>
            </ModeSelect>
            <SelectBox ml={13} x={12} y={6} w={16} h={28} color={BLUE} />
            <SelectBox ml={16} x={8} y={8} w={24} h={24} color="#a9afb6" />
            <SelectBox ml={16} x={6} y={13} w={28} h={16} color="#a9afb6" />
            <Tool {...IconProps} $ml={16}>
              <ellipse cx="20" cy="17" rx="19" ry="15" />
              <path d="M20 32 C26 34 24 38 20 40" />
            </Tool>
            <Tool {...IconProps} $ml={17}>
              <path d="M1 18 L16 2 L28 21 L20 29 Z M6 13 L19 6 M9 17 L22 10 M12 21 L24 15" />
              <path d="M24 26 L37 40" strokeWidth="4" />
            </Tool>
            <Tool {...IconProps} $ml={15}>
              <path d="M10 3 L13 12 L21 12 L15 18 L17 27 L10 22 L3 26 L5 17 L1 12 L8 11 Z" />
              <path d="M15 22 L36 41" />
            </Tool>
            <Tool {...IconProps} stroke="none" fill="#666d73" $ml={15}>
              <rect x="1" y="1" width="19" height="9" rx="2" />
              <rect x="1" y="15" width="30" height="9" rx="2" />
              <rect x="1" y="29" width="40" height="9" rx="2" />
            </Tool>
            <Tool {...IconProps} $ml={14}>
              <path d="M1 1 C14 4 26 14 30 26 C27 32 17 32 10 28 C4 18 1 10 1 1 Z" />
              <path d="M4 8 L14 24 M10 12 L8 17 M16 15 L12 20 M22 20 L16 26 M24 28 L38 40" />
            </Tool>
            <Tool width="24" height="18" viewBox="0 0 24 18" fill={ICON} $ml={8}>
              <path d="M0 0 H24 L12 18 Z" />
            </Tool>
            <ToolSep $ml={15} />
            <Tool {...IconProps} $ml={14}>
              <circle cx="7" cy="23" r="5" />
              <circle cx="20" cy="36" r="5" />
              <circle cx="36" cy="7" r="5" />
              <path d="M11 27 L16 32 M22 31 L34 12" />
            </Tool>
            <Tool {...IconProps} width="30" height="32" $ml={362}>
              {zoomBase}
              <path d="M9 17 H21" strokeWidth="3" />
            </Tool>
            <HSlider $w={159} $fill={0} $ml={11}>
              <HKnob />
            </HSlider>
            <Tool {...IconProps} width="32" height="33" $ml={17}>
              {zoomBase}
              <path d="M15 11 V23 M9 17 H21" />
            </Tool>
          </Toolbar>
        </Editor>

        <Sidebar>
          <ModuleHead>
            <HeadPlay width="16" height="24" viewBox="0 0 16 24" fill={ICON}>
              <path d="M0 0 L16 12 L0 24 Z" />
            </HeadPlay>
            <ModuleSelect>
              <ModuleValue>
                All
                <svg width="18" height="11" viewBox="0 0 18 11" fill="none" stroke="#6b7278" strokeWidth="3">
                  <path d="M1 1 L9 9 L17 1" />
                </svg>
              </ModuleValue>
              <MenuBox>
                <i />
                <i />
                <i />
              </MenuBox>
            </ModuleSelect>
          </ModuleHead>
          <Module icon="voice" name="Voice De-noise" />
          <Module icon="wow" name="Wow & Flutter" />
          <SectionHead>
            Utility
            <SectionArrow />
          </SectionHead>
          {utilityModules.map(([icon, name]) => (
            <Module key={name} icon={icon} name={name} />
          ))}
          <SectionHead>
            Measurements
            <SectionArrow />
          </SectionHead>
          <Module icon="similar" name="Find Similar" />
          <Module icon="markers" name="Markers" />
          <ScrollThumb />
        </Sidebar>

        <StatusPanel>
          <TimeBlock>
            <TimeFormat>
              h:m:s.ms
              <FormatArrow />
            </TimeFormat>
            <TimeRow>
              <TimeValue>00:00:00.000</TimeValue>
              <Tool width="32" height="32" viewBox="0 0 32 32" fill="none" stroke={ICON} strokeWidth="2">
                <path d="M3 20 V14 C3 5 9 1 16 1 C23 1 29 5 29 14 V20" />
                <rect x="1" y="17" width="6" height="14" rx="3" />
                <rect x="25" y="17" width="6" height="14" rx="3" />
              </Tool>
              <Tool width="24" height="24" viewBox="0 0 24 24" fill={ICON} $ml={16}>
                <circle cx="12" cy="12" r="12" />
              </Tool>
              <Tool width="28" height="24" viewBox="0 0 28 24" fill={ICON} $ml={20}>
                <path d="M0 0 H2 V24 H0 Z M28 0 V24 L6 12 Z" />
              </Tool>
              <Tool width="22" height="24" viewBox="0 0 22 24" fill={ICON} $ml={22}>
                <path d="M0 0 L22 12 L0 24 Z" />
              </Tool>
              <Tool width="40" height="40" viewBox="0 0 40 40" $ml={14}>
                <rect x="1" y="1" width="38" height="38" fill="none" stroke="#c4c8cc" strokeWidth="2" strokeDasharray="4 5" />
                <path d="M11 8 L31 20 L11 32 Z" fill={ICON} />
              </Tool>
              <Tool width="36" height="32" viewBox="0 0 36 32" fill="none" stroke={ICON} strokeWidth="2" $ml={14}>
                <path d="M5 14 C6 6 12 1 18 1 C24 1 28 4 31 9 M31 18 C30 26 24 31 18 31 C12 31 8 28 5 23" />
                <path d="M0 13 H10 L5 22 Z M26 19 H36 L31 10 Z" fill={ICON} stroke="none" />
              </Tool>
              <Tool width="32" height="32" viewBox="0 0 32 32" fill="none" stroke={ICON} strokeWidth="2" $ml={18}>
                <path d="M1 0 V32 M31 0 V32 M6 6 H24" />
                <path d="M22 2 L29 6 L22 10 Z M6 12 L24 21 L6 31 Z" fill={ICON} stroke="none" />
              </Tool>
            </TimeRow>
          </TimeBlock>
          <Divider />
          <MeterBlock>
            <MeterScale>
              {meterLabels.map(([label, x]) => (
                <MeterLabel key={label} $x={x}>
                  {label}
                </MeterLabel>
              ))}
              {tallTicks.map((x) => (
                <MeterTick key={x} $x={x} />
              ))}
              {shortTicks.map((x) => (
                <MeterTick key={x} $x={x} $short />
              ))}
            </MeterScale>
            <MeterRow $mt={0}>
              <MeterName>L</MeterName>
              <MeterBar />
              <MeterPeak />
              <MeterValue>-2.0</MeterValue>
            </MeterRow>
            <MeterRow $mt={22}>
              <MeterName>R</MeterName>
              <MeterBar />
              <MeterPeak />
              <MeterValue>-2.0</MeterValue>
            </MeterRow>
            <MeterFooter $mt={16} $gap={9}>
              32-bit float | 44100 Hz
            </MeterFooter>
          </MeterBlock>
          <Divider />
          <RangeGrid $columns="77px 163px 163px 1fr" $width={570}>
            <span />
            <RangeHead>Start</RangeHead>
            <RangeHead>End</RangeHead>
            <RangeHead>Length</RangeHead>
            <RangeLabel>Sel</RangeLabel>
            <RangeValue>00:00:00.000</RangeValue>
            <span />
            <span />
            <RangeLabel>View</RangeLabel>
            <RangeValue>00:00:00.000</RangeValue>
            <RangeValue>00:00:05.000</RangeValue>
            <RangeValue>00:00:05.000</RangeValue>
            <RangeFooter $from={17} $pr={19} $gap={9}>
              h:m:s.ms
            </RangeFooter>
          </RangeGrid>
          <Divider />
          <RangeGrid $columns="19px 110px 101px 1fr" $width={320}>
            <span />
            <RangeHead>Low</RangeHead>
            <RangeHead>High</RangeHead>
            <RangeHead>Range</RangeHead>
            <span />
            <span />
            <span />
            <span />
            <span />
            <RangeValue>0</RangeValue>
            <RangeValue>22050</RangeValue>
            <RangeValue>22050</RangeValue>
            <RangeFooter $from={19} $pr={27} $gap={9}>
              Hz
            </RangeFooter>
          </RangeGrid>
          <Divider />
          <CursorBlock>Cursor</CursorBlock>
        </StatusPanel>

        <HistoryPanel>
          <HistoryHead>
            <HistoryArrow />
            History
          </HistoryHead>
          <HistoryItem>Initial State</HistoryItem>
        </HistoryPanel>
      </Workspace>
    </Page>
  );
}
